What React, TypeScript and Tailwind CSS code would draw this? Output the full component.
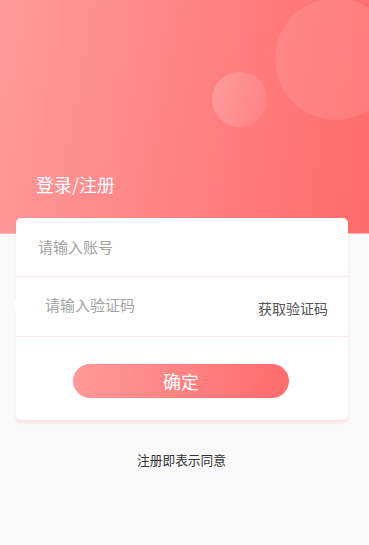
import React from "react";

export default function App() {
  const font = { fontFamily: '"Noto Sans CJK SC", "Noto Sans", sans-serif' };
  return (
    <div className="min-h-[545px] w-[369px] bg-[#f9f9f9] overflow-hidden" style={font}>
      <div className="relative h-[234px] overflow-hidden bg-[linear-gradient(100deg,#ff9b9b_0%,#ff8585_45%,#ff6a6a_100%)] border-b border-[#ffb4b4]">
        <div className="absolute left-[275px] top-[-2px] h-[122px] w-[122px] rounded-full bg-white/10" />
        <div className="absolute left-[212px] top-[72px] h-[55px] w-[55px] rounded-full bg-[linear-gradient(110deg,rgba(255,255,255,0.22),rgba(255,255,255,0.06))]" />
        <div className="relative pl-[36px] pt-[171px] text-[18px] leading-[26px] text-white">登录/注册</div>
      </div>
      <div className="relative z-10 -mt-[16px] ml-4 w-[332px] rounded-[5px] bg-white shadow-[0_3px_3px_rgba(255,120,120,0.18)]">
        <div className="flex h-[59px] items-center border-b border-[#fdeaea] pl-[22px] text-[15px] text-[#a3a3a3]">
          请输入账号
        </div>
        <div className="relative flex h-[60px] items-center justify-between border-b border-[#fdeaea] pl-[29px] pr-[20px]">
          <div className="absolute left-[-2px] top-[22px] h-[13px] w-[8px] rounded-full bg-white" />
          <span className="text-[15px] text-[#a3a3a3] -mt-[3px]">请输入验证码</span>
          <span className="text-[14px] text-[#555] mt-[3px]">获取验证码</span>
        </div>
        <div className="flex justify-center pt-[27px] pb-[22px] pr-[2px]">
          <div className="flex h-[34px] w-[216px] items-center justify-center rounded-full bg-[linear-gradient(100deg,#ff9a9a,#ff6b6b)] text-[18px] text-white">
            确定
          </div>
        </div>
      </div>
      <div className="mt-[31px] pr-[6px] text-center text-[12.7px] leading-[18px] text-[#333]">注册即表示同意</div>
    </div>
  );
}
